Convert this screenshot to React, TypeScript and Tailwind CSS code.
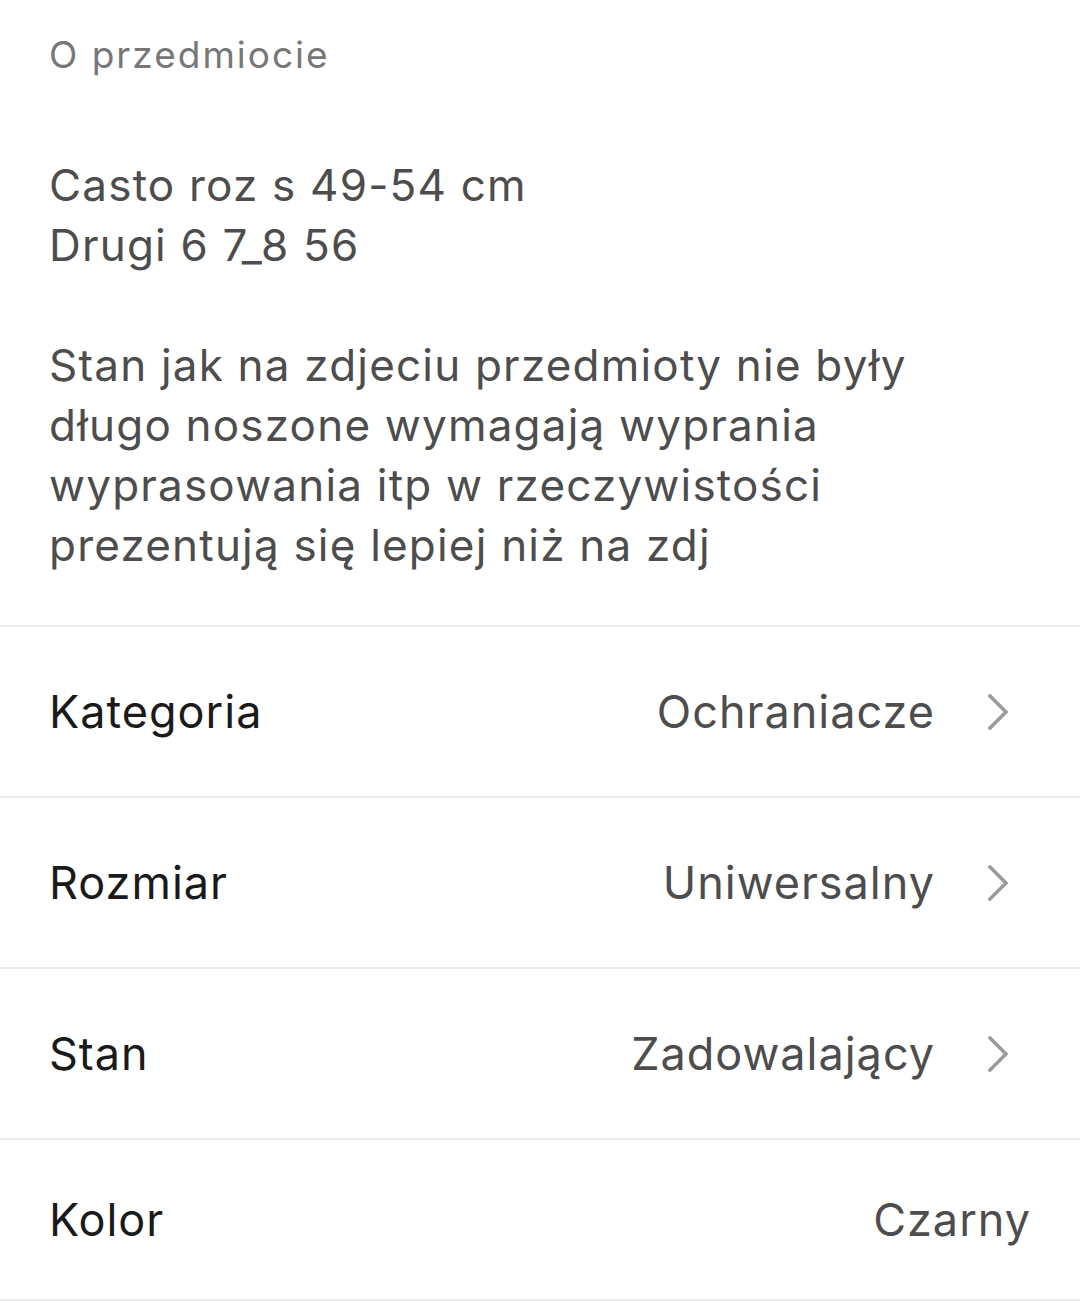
const description = `Casto roz s 49-54 cm
Drugi 6 7_8 56

Stan jak na zdjeciu przedmioty nie były długo noszone wymagają wyprania wyprasowania itp w rzeczywistości prezentują się lepiej niż na zdj`;

const attributes = [
  { label: 'Kategoria', value: 'Ochraniacze', link: true },
  { label: 'Rozmiar', value: 'Uniwersalny', link: true },
  { label: 'Stan', value: 'Zadowalający', link: true },
  { label: 'Kolor', value: 'Czarny', link: false },
];

function Chevron() {
  return (
    <svg width="22" height="36" viewBox="0 0 22 36" fill="none" className="ml-[52px] mr-[22px] shrink-0">
      <path d="M3 2 L19 18 L3 34" stroke="#9a9a9a" strokeWidth="3.5" strokeLinecap="square" />
    </svg>
  );
}

export default function App() {
  return (
    <div className="min-h-[1301px] bg-white font-['Inter',sans-serif]">
      <div className="px-[49px] pt-[35px] pb-[50px]">
        <h2 className="text-[37px] leading-[40px] tracking-[2px] text-[#777777]">O przedmiocie</h2>
        <p className="mt-[80px] max-w-[900px] whitespace-pre-line text-[44px] leading-[60px] tracking-[1.2px] text-[#4d4d4d]">
          {description}
        </p>
      </div>
      <ul>
        {attributes.map((item) => (
          <li
            key={item.label}
            className="flex h-[171px] items-center border-t-2 border-[#ececec] px-[49px] text-[45px] tracking-[1px] last:h-[163px] last:border-b-2"
          >
            <span className="text-[#1a1a1a]">{item.label}</span>
            <span className="ml-auto text-[#4d4d4d]">{item.value}</span>
            {item.link && <Chevron />}
          </li>
        ))}
      </ul>
    </div>
  );
}
